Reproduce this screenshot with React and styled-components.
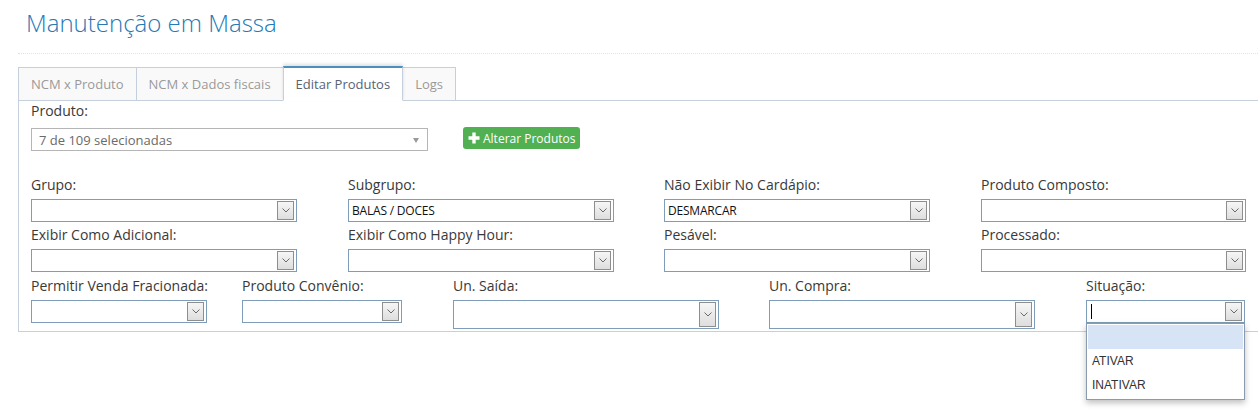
import React from "react";
import styled, { createGlobalStyle } from "styled-components";

const GlobalStyle = createGlobalStyle`
  html, body { margin: 0; padding: 0; background: #fff; }
  body {
    font-family: "Open Sans", "Liberation Sans", sans-serif;
    color: #393939;
    overflow: hidden;
  }
`;

const Page = styled.div`
  width: 1258px;
  height: 412px;
  overflow: hidden;
`;

const Header = styled.div`
  margin-left: 18px;
  padding: 7px 0 14px;
  border-bottom: 1px dotted #e2e2e2;
`;

const Title = styled.h1`
  margin: 0 8px;
  font-size: 24px;
  line-height: 32px;
  font-weight: 300;
  color: #2679b5;
`;

const TabBar = styled.div`
  display: flex;
  align-items: flex-end;
  margin: 12px 0 -1px 18px;
  position: relative;
  z-index: 1;
`;

const Tab = styled.div`
  padding: 7px 12px;
  line-height: 18px;
  font-size: 13px;
  border: 1px solid #c5d0dc;
  margin-right: -1px;
  background: ${(p) => (p.$active ? "#fff" : "#f9f9f9")};
  color: ${(p) => (p.$active ? "#576373" : "#999")};
  ${(p) =>
    p.$active &&
    `
    border-top: 2px solid #4c8fbd;
    border-bottom-color: #fff;
    position: relative;
    z-index: 2;
    box-shadow: 0 -2px 3px 0 rgba(0,0,0,0.12);
  `}
`;

const Panel = styled.div`
  margin-left: 18px;
  width: 1270px;
  border: 1px solid #c5d0dc;
  padding: 0 12px 2px;
  box-sizing: border-box;
`;

const Label = styled.div`
  font-size: 14px;
  line-height: 20px;
  color: #393939;
  margin-bottom: ${(p) => p.$gap || 4}px;
  white-space: nowrap;
`;

const ProdutoRow = styled.div`
  display: flex;
  align-items: flex-start;
  gap: 35px;
`;

const ChosenBox = styled.div`
  width: 397px;
  height: 23px;
  box-sizing: border-box;
  border: 1px solid #b5b5b5;
  display: flex;
  align-items: center;
  justify-content: space-between;
  padding: 0 8px 0 7px;
  font-size: 13px;
  color: #6a6a6a;
`;

const Caret = styled.span`
  width: 0;
  height: 0;
  border-left: 3.5px solid transparent;
  border-right: 3.5px solid transparent;
  border-top: 5px solid #999;
  margin-top: 1px;
`;

const GreenButton = styled.button`
  margin-top: -1px;
  height: 22px;
  display: flex;
  align-items: center;
  gap: 3px;
  padding: 0 5px;
  border: none;
  border-radius: 3px;
  background: #51b051;
  color: #fff;
  font-family: "Open Sans", sans-serif;
  font-size: 12px;
  cursor: pointer;
`;

const FieldGrid = styled.div`
  display: grid;
  grid-template-columns: ${(p) => p.$cols};
  row-gap: 3px;
  align-items: start;
  margin-top: ${(p) => p.$mt}px;
`;

const Field = styled.div`
  display: flex;
  flex-direction: column;
  align-items: flex-start;
`;

const SelectWrap = styled.div`
  position: relative;
`;

const SelectBox = styled.div`
  width: ${(p) => p.$w}px;
  height: ${(p) => p.$h}px;
  box-sizing: border-box;
  border: 1px solid #7f9db9;
  background: #fff;
  padding: 1px 2px 1px 3px;
  display: flex;
  align-items: stretch;
  justify-content: space-between;
`;

const SelectText = styled.span`
  align-self: center;
  font-size: 12px;
  color: #111;
  letter-spacing: -0.2px;
  white-space: nowrap;
`;

const Cursor = styled.span`
  align-self: center;
  width: 1px;
  height: 15px;
  background: #000;
  margin-left: 1px;
`;

const ArrowBtn = styled.span`
  width: 17px;
  box-sizing: border-box;
  border: 1px solid #8e8e8e;
  background: linear-gradient(#f6f6f6, #dedede);
  display: flex;
  align-items: center;
  justify-content: center;
`;

const Dropdown = styled.div`
  position: absolute;
  top: 100%;
  left: 0;
  right: 0;
  box-sizing: border-box;
  border: 1px solid #8a9bb0;
  background: #fff;
  padding: 1px 1px 2px;
  box-shadow: 0 3px 6px rgba(0, 0, 0, 0.25);
  z-index: 5;
`;

const Option = styled.div`
  height: 24px;
  line-height: 24px;
  padding-left: 4px;
  font-family: "Liberation Sans", Arial, sans-serif;
  font-size: 12px;
  color: #333;
  background: ${(p) => (p.$hl ? "#d7e4f6" : "transparent")};
`;

const Chevron = () => (
  <svg width="8" height="5" viewBox="0 0 8 5">
    <path d="M0.5 0.5 L4 4 L7.5 0.5" fill="none" stroke="#6a6a6a" strokeWidth="1" />
  </svg>
);

const Plus = () => (
  <svg width="12" height="12" viewBox="0 0 12 12">
    <path d="M4.3 0.5h3.4v3.8h3.8v3.4H7.7v3.8H4.3V7.7H0.5V4.3h3.8z" fill="#fff" />
  </svg>
);

const Select = ({ w, h = 23, value, cursor, children }) => (
  <SelectWrap>
    <SelectBox $w={w} $h={h}>
      {cursor ? <Cursor /> : <SelectText>{value || ""}</SelectText>}
      <ArrowBtn>
        <Chevron />
      </ArrowBtn>
    </SelectBox>
    {children}
  </SelectWrap>
);

const SelField = ({ label, ...rest }) => (
  <Field>
    <Label>{label}</Label>
    <Select {...rest} />
  </Field>
);

export default function App() {
  return (
    <Page>
      <GlobalStyle />
      <Header>
        <Title>Manutenção em Massa</Title>
      </Header>
      <TabBar>
        <Tab>NCM x Produto</Tab>
        <Tab>NCM x Dados fiscais</Tab>
        <Tab $active>Editar Produtos</Tab>
        <Tab>Logs</Tab>
      </TabBar>
      <Panel>
        <Label $gap={7}>Produto:</Label>
        <ProdutoRow>
          <ChosenBox>
            <span>7 de 109 selecionadas</span>
            <Caret />
          </ChosenBox>
          <GreenButton>
            <Plus />
            Alterar Produtos
          </GreenButton>
        </ProdutoRow>

        <FieldGrid $cols="317px 316px 317px 316px" $mt={24}>
          <SelField label="Grupo:" w={266} />
          <SelField label="Subgrupo:" w={266} value="BALAS / DOCES" />
          <SelField label="Não Exibir No Cardápio:" w={266} value="DESMARCAR" />
          <SelField label="Produto Composto:" w={265} />
          <SelField label="Exibir Como Adicional:" w={266} />
          <SelField label="Exibir Como Happy Hour:" w={266} />
          <SelField label="Pesável:" w={266} />
          <SelField label="Processado:" w={265} />
        </FieldGrid>

        <FieldGrid $cols="211px 211px 316px 317px 200px" $mt={4}>
          <SelField label="Permitir Venda Fracionada:" w={176} />
          <SelField label="Produto Convênio:" w={160} />
          <SelField label="Un. Saída:" w={266} h={29} />
          <SelField label="Un. Compra:" w={266} h={29} />
          <Field>
            <Label>Situação:</Label>
            <Select w={159} cursor>
              <Dropdown>
                <Option $hl />
                <Option>ATIVAR</Option>
                <Option>INATIVAR</Option>
              </Dropdown>
            </Select>
          </Field>
        </FieldGrid>
      </Panel>
    </Page>
  );
}
